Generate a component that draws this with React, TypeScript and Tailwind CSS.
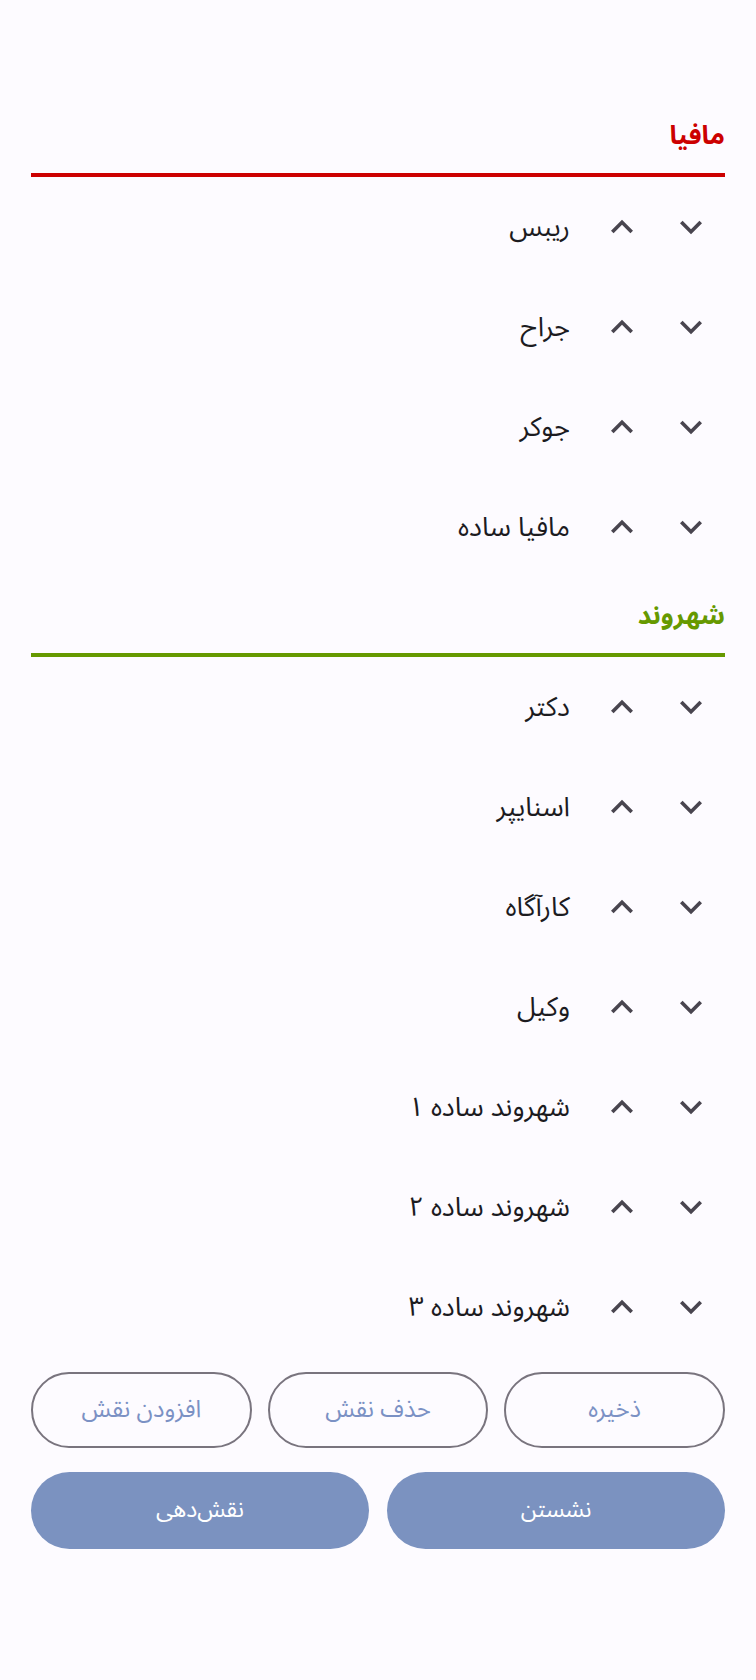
import React from "react";

type Section = {
  title: string;
  color: string;
  roles: string[];
};

const sections: Section[] = [
  { title: "مافیا", color: "red", roles: ["ریبس", "جراح", "جوکر", "مافیا ساده"] },
  {
    title: "شهروند",
    color: "green",
    roles: ["دکتر", "اسنایپر", "کارآگاه", "وکیل", "شهروند ساده ۱", "شهروند ساده ۲", "شهروند ساده ۳"],
  },
];

function ChevronDown() {
  return (
    <svg viewBox="0 0 24 24" className="w-[44px] h-[44px] fill-[#49454f]">
      <path d="M16.59 8.59L12 13.17 7.41 8.59 6 10l6 6 6-6z" />
    </svg>
  );
}

function ChevronUp() {
  return (
    <svg viewBox="0 0 24 24" className="w-[44px] h-[44px] fill-[#49454f]">
      <path d="M12 8l-6 6 1.41 1.41L12 10.83l4.59 4.58L18 14z" />
    </svg>
  );
}

function RoleRow({ name }: { name: string }) {
  return (
    <div className="h-[100px] flex items-center pr-[12px]">
      <ChevronDown />
      <div className="w-[25px]" />
      <ChevronUp />
      <span className="mr-[30px] text-[27px] text-[#1c1b1f] leading-none">{name}</span>
    </div>
  );
}

function RoleSection({ section }: { section: Section }) {
  const isRed = section.color === "red";
  return (
    <div>
      <div className="h-[76px] flex items-center">
        <h2 className={isRed ? "text-[26px] font-bold text-[#cc0000]" : "text-[26px] font-bold text-[#669900]"}>
          {section.title}
        </h2>
      </div>
      <div className={isRed ? "h-[4px] bg-[#cc0000]" : "h-[4px] bg-[#669900]"} />
      {section.roles.map((r) => (
        <RoleRow key={r} name={r} />
      ))}
    </div>
  );
}

export default function App() {
  return (
    <div
      dir="rtl"
      className="min-h-screen bg-[#fdfbff] px-[31px] pt-[97px] pb-10 font-['Noto_Sans_Arabic','DejaVu_Sans',sans-serif]"
    >
      {sections.map((s) => (
        <RoleSection key={s.title} section={s} />
      ))}

      {/* action buttons */}
      <div className="mt-[15px] grid grid-cols-3 gap-[16px]">
        {["ذخیره", "حذف نقش", "افزودن نقش"].map((label) => (
          <button
            key={label}
            className="h-[76px] rounded-full border-2 border-[#79747e] text-[24px] text-[#7b91c4]"
          >
            {label}
          </button>
        ))}
      </div>
      <div className="mt-[24px] grid grid-cols-2 gap-[18px]">
        {["نشستن", "نقش‌دهی"].map((label) => (
          <button key={label} className="h-[77px] rounded-full bg-[#7b92c0] text-[23px] text-white">
            {label}
          </button>
        ))}
      </div>
    </div>
  );
}
